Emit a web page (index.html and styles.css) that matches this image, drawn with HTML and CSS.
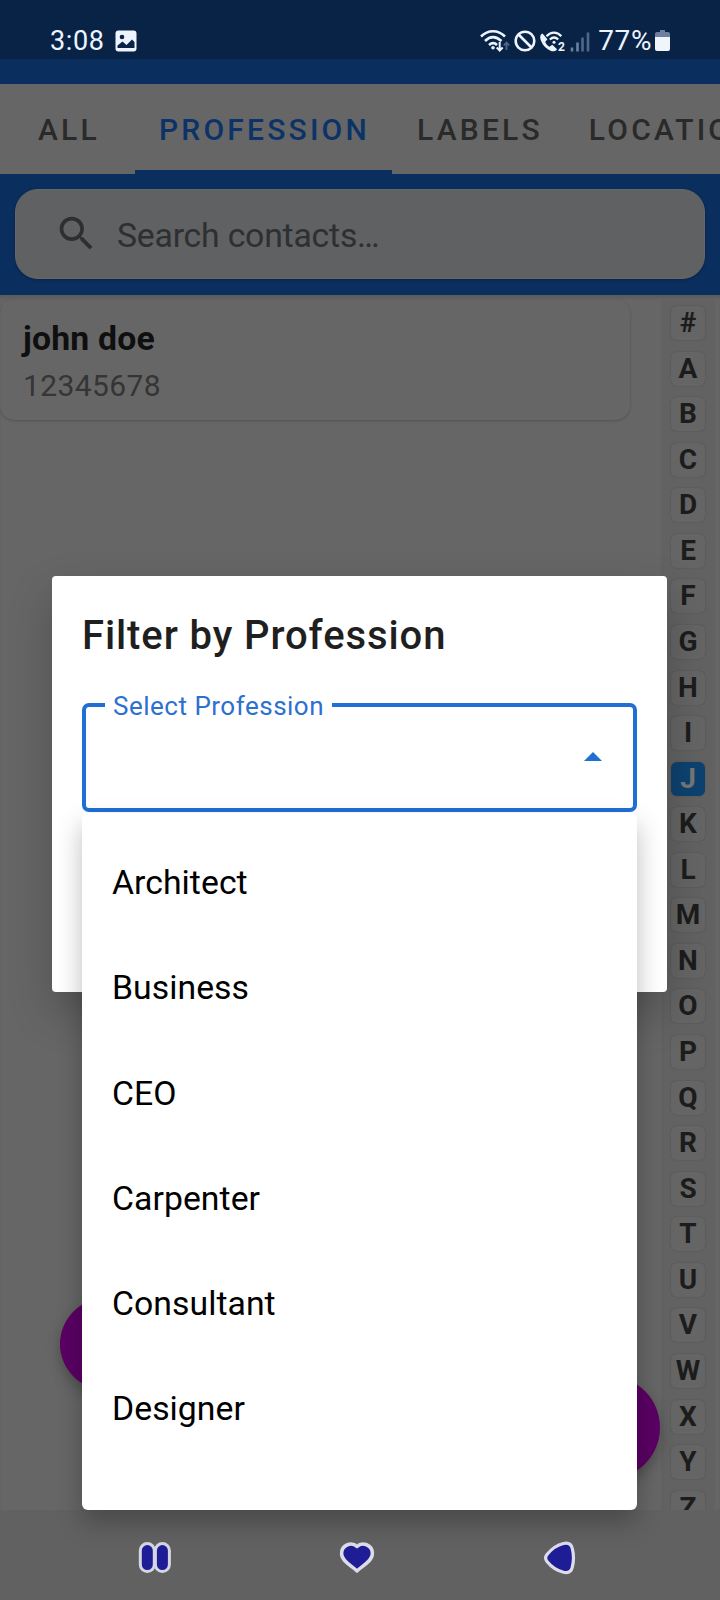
FILE: index.html
```html
<!DOCTYPE html>
<html lang="en">
<head>
<meta charset="UTF-8">
<title>Contacts</title>
<link rel="stylesheet" href="styles.css">
</head>
<body>
<div class="screen">

  <header class="status">
    <span class="clock">3:08</span>
    <svg class="photo" width="22" height="22" viewBox="0 0 22 22">
      <rect x="0.5" y="0.5" width="21" height="21" rx="3" fill="#eef4ff"/>
      <circle cx="7" cy="7" r="2.3" fill="#082346"/>
      <path d="M2.500 18v-2.500l5-4 4 3.500 5.500-5.500 2.500 2.500v6z" fill="#082346"/>
    </svg>
    <svg class="icons" width="112" height="26" viewBox="0 0 112 26" fill="none" stroke="#eef4ff" stroke-width="2.600">
      <path d="M1 8.500c7-7 17-7 24 0M5 13c5-5 11-5 16.500 0M9 17c3-2.500 5.500-2.500 8 0"/>
      <circle cx="13" cy="19.800" r="1.800" fill="#eef4ff" stroke="none"/>
      <path d="M19.700 14v8M16.700 19.500l3 3 3-3" stroke-width="2"/>
      <path d="M26.500 22v-7M23.800 17.500l2.700-3 2.700 3" stroke="#50678a" stroke-width="1.800"/>
      <circle cx="45" cy="13" r="9.300"/>
      <path d="M38.500 6.500l13 13"/>
      <path d="M62.500 5.500c-2.500 1-2.800 4-1.500 7.200 1.800 4.800 5.500 8.500 10 10.200 2.700.8 5 .2 6-1.700l-4.700-4.500-2.900 2c-2.200-1.300-3.400-2.800-4.200-4.700l2.200-2.700z" fill="#eef4ff" stroke="none"/>
      <path d="M66.500 8.200c4.500-4.800 10.500-4.800 14.800 0M69.800 11.500c2.800-2.600 5.800-2.600 8.400 0" stroke-width="2.200"/>
      <circle cx="74" cy="14.200" r="1.500" fill="#eef4ff" stroke="none"/>
      <text x="78" y="23.200" class="sim">2</text>
      <path d="M92 23.500v-4M97.500 23.500v-9" stroke="#6d809d"/>
      <path d="M102.500 23.500v-14M108 23.500v-19" stroke="#50678a"/>
    </svg>
    <span class="percent">77%</span>
    <svg class="battery" width="15" height="21" viewBox="0 0 15 21">
      <path d="M5 0h5v2h3a2 2 0 0 1 2 2v4H0V4a2 2 0 0 1 2-2h3z" fill="#6d809d"/>
      <path d="M0 7h15v12a2 2 0 0 1-2 2H2a2 2 0 0 1-2-2z" fill="#f0f4fb"/>
    </svg>
  </header>

  <div class="appbar"></div>

  <nav class="tabs">
    <div class="tab tab-all">ALL</div>
    <div class="tab tab-active">PROFESSION</div>
    <div class="tab tab-labels">LABELS</div>
    <div class="tab">LOCATION</div>
  </nav>

  <div class="search-wrap">
    <div class="search">
      <svg class="search-icon" width="45" height="45" viewBox="0 0 24 24">
        <path fill="#2d2f31" d="M15.500 14h-.79l-.28-.27A6.471 6.471 0 0 0 16 9.500 6.500 6.500 0 1 0 9.500 16c1.610 0 3.090-.59 4.230-1.570l.27.28v.79l5 4.990L20.490 19l-4.990-5zm-6 0C7.010 14 5 11.990 5 9.500S7.010 5 9.500 5 14 7.010 14 9.500 11.990 14 9.500 14z"/>
      </svg>
      <span>Search contacts…</span>
    </div>
  </div>

  <main class="content">
    <div class="contact">
      <div class="name">john doe</div>
      <div class="phone">12345678</div>
    </div>
    <div class="index">
      <span>#</span><span>A</span><span>B</span><span>C</span><span>D</span><span>E</span><span>F</span>
      <span>G</span><span>H</span><span>I</span><span class="current">J</span><span>K</span><span>L</span>
      <span>M</span><span>N</span><span>O</span><span>P</span><span>Q</span><span>R</span><span>S</span>
      <span>T</span><span>U</span><span>V</span><span>W</span><span>X</span><span>Y</span><span>Z</span>
    </div>
    <div class="fab fab-left"></div>
    <div class="fab fab-right"></div>
  </main>

  <footer class="navbar">
    <svg width="34" height="34" viewBox="0 0 34 34" fill="#1f1d96" stroke="#d6d6e2" stroke-width="3">
      <rect x="2.300" y="2.600" width="14" height="28" rx="7"/>
      <rect x="17.400" y="2.600" width="14" height="28" rx="7"/>
    </svg>
    <svg class="heart" width="36" height="34" viewBox="0 0 36 34" fill="#1f1d96" stroke="#dcdcea" stroke-width="3.500" stroke-linejoin="round">
      <path d="M18 30C15 26 2.600 21 2.600 12.500 2.600 3.500 13 .5 18 5.500c5-5 15.400-2 15.400 7C33.400 21 21 26 18 30z"/>
    </svg>
    <svg width="34" height="34" viewBox="0 0 34 34" fill="#1f1d96" stroke="#dcdcea" stroke-width="3.200" stroke-linejoin="round">
      <path d="M4 13.500C8 8.500 14 4 20.500 2.500c4.500-1 7.700.7 8.700 4.600 1.600 6 1.600 13.500 0 19.500-1 4-4.200 5.600-8.700 4.600C14 29.700 8 25.500 4 20.500c-2-2.500-2-4.500 0-7z"/>
    </svg>
  </footer>

  <div class="dialog">
    <h1>Filter by Profession</h1>
    <div class="field">
      <span class="field-label">Select Profession</span>
      <svg class="arrow" width="18" height="9" viewBox="0 0 18 9"><path d="M0 9l9-9 9 9z" fill="#1f6fd6"/></svg>
    </div>
  </div>

  <ul class="menu">
    <li>Architect</li>
    <li>Business</li>
    <li>CEO</li>
    <li>Carpenter</li>
    <li>Consultant</li>
    <li>Designer</li>
  </ul>

</div>
</body>
</html>
```
FILE: styles.css
```css
body {
  margin: 0;
  font-family: Roboto, sans-serif;
}

.screen {
  position: relative;
  display: flex;
  flex-direction: column;
  width: 720px;
  height: 1600px;
  overflow: hidden;
  background: #666;
}

/* status bar */
.status {
  display: flex;
  align-items: center;
  box-sizing: border-box;
  height: 59px;
  padding: 22px 50px 0 50px;
  background: #082346;
  color: #eef4ff;
  font-size: 27px;
}

.clock {
  width: 65px;
  letter-spacing: 0.6px;
}

.icons {
  margin-left: auto;
}

.sim {
  font-size: 12px;
  font-weight: 700;
  fill: #eef4ff;
  stroke: none;
}

.percent {
  margin: 0 3px 0 6px;
  font-size: 28px;
  letter-spacing: 0.6px;
}

.appbar {
  height: 25px;
  background: #0a2e5e;
}

/* tabs */
.tabs {
  display: flex;
  height: 90px;
  background: #666;
  color: #2a2a2a;
  font-size: 30px;
  font-weight: 500;
  letter-spacing: 3.2px;
  line-height: 92px;
}

.tab {
  flex: none;
  box-sizing: border-box;
  padding: 0 24px;
}

.tab-all {
  width: 135px;
  padding-left: 38px;
}

.tab-active {
  width: 257px;
  border-bottom: 4px solid #0a2e5e;
  color: #0c3368;
}

.tab-labels {
  padding: 0 22px 0 25px;
}

/* search */
.search-wrap {
  height: 121px;
  box-sizing: border-box;
  padding: 15px;
  background: #0a2e5e;
}

.search {
  display: flex;
  align-items: center;
  box-sizing: border-box;
  height: 90px;
  padding: 2px 0 0 38px;
  border: 1px solid #646667;
  border-radius: 23px;
  background: #606163;
  box-shadow: 0 1px 3px rgba(0, 0, 0, 0.25);
  color: #2d2f31;
  font-size: 33.75px;
  letter-spacing: -0.2px;
}

.search-icon {
  margin: -3px 18px 0 0;
}

/* contact list */
.content {
  position: relative;
  display: flex;
  justify-content: space-between;
  align-items: flex-start;
  height: 1215px;
  overflow: hidden;
  box-shadow: inset 0 4px 4px -2px rgba(0, 0, 0, 0.15);
}

.contact {
  box-sizing: border-box;
  width: 630px;
  height: 121px;
  margin-top: 4px;
  padding: 18px 23px;
  border-radius: 15px;
  box-shadow: 0 1px 3px rgba(0, 0, 0, 0.2);
}

.name {
  color: #0f0f0f;
  font-size: 33.75px;
  font-weight: 700;
  letter-spacing: 0.2px;
  line-height: 44px;
}

.phone {
  color: #353535;
  font-size: 30px;
  letter-spacing: 0.4px;
  line-height: 50px;
}

.index {
  display: flex;
  flex-direction: column;
  gap: 11.57px;
  width: 34px;
  margin: 5px 5px 0 0;
  padding: 6px 10px;
  background: #626262;
}

.index span {
  height: 34px;
  border-radius: 6px;
  background: #656565;
  box-shadow: 0 0 2px rgba(0, 0, 0, 0.2);
  color: #1c1c1c;
  font-size: 28px;
  font-weight: 700;
  line-height: 34px;
  text-align: center;
}

.index .current {
  background: #0d4270;
  color: #777;
}

.fab {
  position: absolute;
  border-radius: 50%;
  background: #5a0063;
  box-shadow: 0 6px 14px rgba(0, 0, 0, 0.25);
}

.fab-left {
  left: 60px;
  top: 1003px;
  width: 92px;
  height: 92px;
}

.fab-right {
  right: 60px;
  top: 1081px;
  width: 103px;
  height: 103px;
}

/* system navigation */
.navbar {
  display: flex;
  justify-content: space-between;
  align-items: center;
  box-sizing: border-box;
  height: 90px;
  padding: 6px 143px 0 138px;
  background: #616161;
}

.heart {
  margin-right: 2px;
}

/* dialog */
.dialog {
  position: absolute;
  left: 52px;
  top: 576px;
  box-sizing: border-box;
  width: 615px;
  height: 416px;
  padding: 30px;
  border-radius: 4px;
  background: #fff;
  box-shadow: 0 20px 45px rgba(0, 0, 0, 0.22);
}

.dialog h1 {
  margin: 0 0 37px;
  color: #1f1f1f;
  font-size: 40px;
  font-weight: 500;
  letter-spacing: 0.9px;
  line-height: 60px;
}

.field {
  position: relative;
  display: flex;
  align-items: center;
  justify-content: flex-end;
  box-sizing: border-box;
  height: 109px;
  padding-right: 31px;
  border: 4px solid #1f6fd6;
  border-radius: 7px;
}

.arrow {
  margin-bottom: 2px;
}

.field-label {
  position: absolute;
  left: 19px;
  top: -16px;
  padding: 0 8px;
  background: #fff;
  color: #2c70d0;
  font-size: 26px;
  letter-spacing: 0.5px;
  line-height: 30px;
}

.menu {
  position: absolute;
  left: 82px;
  top: 813px;
  box-sizing: border-box;
  width: 555px;
  height: 697px;
  margin: 0;
  padding: 17px 30px;
  border-radius: 4px 4px 6px 6px;
  background: #fff;
  box-shadow: 0 12px 26px rgba(0, 0, 0, 0.26);
  list-style: none;
  color: #000;
  font-size: 33.75px;
  letter-spacing: 0.05px;
  line-height: 105.3px;
}
```
